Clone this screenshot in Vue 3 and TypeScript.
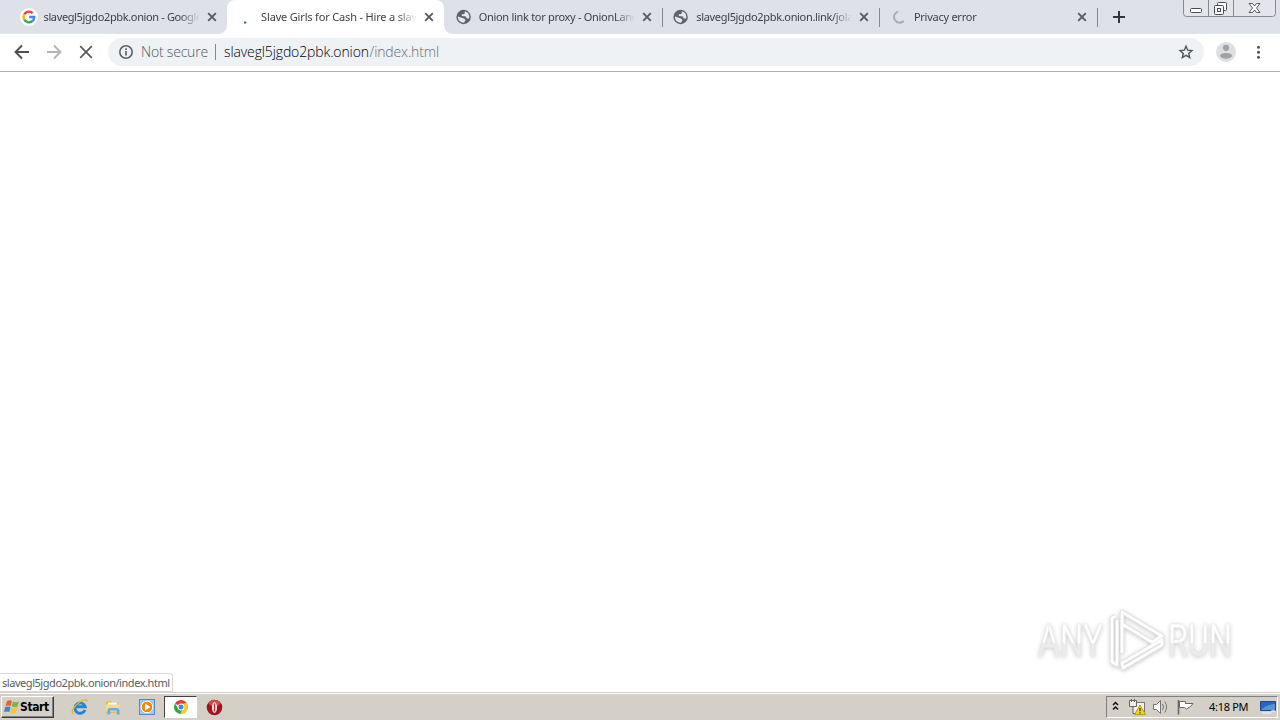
<script setup lang="ts">
type Icon = 'google' | 'dot' | 'globe' | 'spinner'
interface Tab {
  title: string
  icon: Icon
  active?: boolean
  sep?: boolean
  spacing: number
}
const tabs: Tab[] = [
  { title: 'slavegl5jgdo2pbk.onion - Google', icon: 'google', spacing: -0.37 },
  { title: 'Slave Girls for Cash - Hire a slav', icon: 'dot', active: true, spacing: -0.17 },
  { title: 'Onion link tor proxy - OnionLand', icon: 'globe', sep: true, spacing: -0.3 },
  { title: 'slavegl5jgdo2pbk.onion.link/jola', icon: 'globe', sep: true, spacing: -0.33 },
  { title: 'Privacy error', icon: 'spinner', sep: true, spacing: -0.25 },
]
</script>

<template>
  <div class="screen">
    <header class="strip">
      <div v-for="t in tabs" :key="t.title" class="tab" :class="{ active: t.active, sep: t.sep }">
        <svg class="fav" width="18" height="18" viewBox="0 0 18 18">
          <g v-if="t.icon === 'google'" fill="none" stroke-width="2.4">
            <circle cx="9" cy="9" r="9" fill="#fff" />
            <path d="M4.3 6.3A5.3 5.3 0 0 1 12.7 5.2" stroke="#ea4335" />
            <path d="M4.3 11.7A5.3 5.3 0 0 1 4.3 6.3" stroke="#fbbc05" />
            <path d="M12.5 13A5.3 5.3 0 0 1 4.3 11.7" stroke="#34a853" />
            <path d="M9.2 9H14.3A5.3 5.3 0 0 1 12.5 13" stroke="#4285f4" />
          </g>
          <rect v-else-if="t.icon === 'dot'" x="7" y="13.4" width="2.4" height="2" rx=".5" fill="#2f66ba" />
          <g v-else-if="t.icon === 'globe'">
            <circle cx="8.6" cy="9" r="7.2" fill="#5f6368" />
            <path d="M3 8.6 9 10.6 10.6 12 9 14.7C5.2 14.9 2.6 12 3 8.6M9.6 3.2c3 .5 4.8 2.9 4.8 5.8l-.7 1.8-2.2-.6-.5-1.6-4.2-.6V6.3h1.9L10 5z" fill="#e4e7ec" />
          </g>
          <path v-else d="M8 3.6A5.7 5.7 0 1 0 13.8 13" fill="none" stroke="#a6a9b0" stroke-width="1.8" />
        </svg>
        <span class="title" :style="{ letterSpacing: t.spacing + 'px' }">{{ t.title }}</span>
        <svg class="close" width="10" height="10" viewBox="0 0 10 10"><path d="M1.2 1.2 8.8 8.8M8.8 1.2 1.2 8.8" stroke="#585b61" stroke-width="1.9" /></svg>
      </div>
      <svg class="plus" width="12" height="12" viewBox="0 0 12 12"><path d="M6 0V12M0 6H12" stroke="#30343c" stroke-width="2" /></svg>
      <svg class="winbtns" width="94" height="18" viewBox="0 0 94 18">
        <path d="M.5 0V13.5Q.5 16.5 3.5 16.5H89.5Q92.5 16.5 92.5 13.5V0" fill="#e3e5eb" stroke="#858992" />
        <path d="M25.5 0V16M50.5 0V16" stroke="#858992" />
        <g fill="#fafafa" stroke="#484c55">
          <rect x="7.5" y="8.5" width="11" height="4" rx="1" />
          <rect x="34.5" y="2.5" width="9" height="8" rx="1" />
          <rect x="31.5" y="5.5" width="9" height="9" rx="1" />
          <rect x="34.5" y="8.5" width="3" height="3" />
          <path d="M66 3.5H69.5L71.5 6 73.5 3.5H77L73.5 8 77 12.5H73.5L71.5 10 69.5 12.5H66L69.5 8Z" stroke-width=".9" />
        </g>
      </svg>
    </header>

    <div class="toolbar">
      <svg class="nav" width="108" height="37" viewBox="0 0 108 37" fill="none" stroke-width="1.9">
        <path d="M29 18H16M22 11.5 15.5 18 22 24.5" stroke="#4c4f53" />
        <path d="M47 18H60M54 11.5 60.5 18 54 24.5" stroke="#b3b5b8" />
        <path d="M80.2 12.2 91.8 23.8M91.8 12.2 80.2 23.8" stroke="#55585c" stroke-width="1.7" />
      </svg>
      <div class="omnibox">
        <svg class="info" width="16" height="16" viewBox="0 0 16 16"><circle cx="8" cy="8" r="6.2" fill="none" stroke="#5f6368" stroke-width="1.6" /><path d="M8 7V11.5M8 4.3V5.9" stroke="#5f6368" stroke-width="1.7" /></svg>
        <span class="secure">Not secure</span>
        <i class="bar"></i>
        <span class="host">slavegl5jgdo2pbk.onion</span><span class="path">/index.html</span>
        <svg class="star" width="16" height="16" viewBox="0 0 16 16"><path d="M8 2.2 9.7 6.2 13.9 6.6 10.7 9.4 11.7 13.6 8 11.4 4.3 13.6 5.3 9.4 2.1 6.6 6.3 6.2Z" fill="none" stroke="#505357" stroke-width="1.4" /></svg>
      </div>
      <svg class="right" width="76" height="37" viewBox="0 0 76 37">
        <circle cx="22" cy="18" r="10" fill="#dedfe1" />
        <circle cx="22" cy="13.8" r="3.1" fill="#a0a1a4" /><ellipse cx="22" cy="21.8" rx="6" ry="2.9" fill="#a0a1a4" />
        <g fill="#505357"><circle cx="54.5" cy="13.3" r="1.5" /><circle cx="54.5" cy="18.3" r="1.5" /><circle cx="54.5" cy="23.3" r="1.5" /></g>
      </svg>
    </div>

    <main class="page">
      <div class="status">slavegl5jgdo2pbk.onion/index.html</div>
      <svg class="mark" width="204" height="72" viewBox="0 0 204 72">
        <defs>
          <linearGradient id="sheen" x1="0" y1="0" x2="0" y2="1">
            <stop offset=".54" stop-color="#fff" /><stop offset=".56" stop-color="#ececec" />
          </linearGradient>
        </defs>
        <g class="word">
          <text x="4" y="51" textLength="65" lengthAdjust="spacingAndGlyphs">ANY</text>
          <text x="134" y="51" textLength="64" lengthAdjust="spacingAndGlyphs">RUN</text>
        </g>
        <g fill="none" stroke-linejoin="round" transform="translate(75 3)">
          <path d="M13 45V4L53 28 43 34 13 16M7 8 3 10V54L8 57V12M13 55 53 32V37L14 60Z" stroke="#dfdfdf" stroke-width="4.4" />
          <path d="M13 45V4L53 28 43 34 13 16M7 8 3 10V54L8 57V12M13 55 53 32V37L14 60Z" stroke="#fff" stroke-width="2.8" />
        </g>
      </svg>
    </main>

    <footer class="taskbar">
      <div class="start">
        <svg width="16" height="16" viewBox="0 0 16 16"><path d="M3 2Q6 .5 8 2L6.8 7Q4.5 5.8 1.5 7Z" fill="#e7642b" /><path d="M9 2.5Q12 4 15 2.5L13.5 7.5Q11 9 7.7 7.5Z" fill="#78b747" /><path d="M1.2 8Q4.4 6.8 6.6 8L5.3 13Q3 11.8 0 13Z" fill="#3e83d2" /><path d="M7.5 8.6Q10.5 10 13.3 8.6L12 13.5Q9 15 6.2 13.4Z" fill="#f5c52c" /></svg>
        <span>Start</span>
      </div>
      <div class="apps">
        <div class="app">
          <svg width="18" height="18" viewBox="0 0 18 18"><path d="M14 12A5.2 5.2 0 1 1 14.2 8.8H5.2" fill="none" stroke="#1f86d8" stroke-width="2.9" /><path d="M2.2 15.8C-.5 14 3 8.5 7.5 5 11.5 1.8 16.5.2 16.3 4" fill="none" stroke="#e9b32b" stroke-width="1.4" /></svg>
        </div>
        <div class="app">
          <svg width="18" height="18" viewBox="0 0 18 18"><path d="M2 3H7L8.5 4.5H14.5V15H2Z" fill="#e2bd55" /><path d="M4 4.5H13V9H4Z" fill="#f7fbef" /><path d="M2 6.5H15.5V13.5H2Z" fill="#f5dc86" /><path d="M3.5 16.5V12Q3.5 10 6 10H13Q15.5 10 15.5 12V16.5H12.8V12.6H6.2V16.5Z" fill="#62b0dc" /></svg>
        </div>
        <div class="app">
          <svg width="18" height="18" viewBox="0 0 18 18"><rect x="1.5" y="1.5" width="15" height="15" fill="#9ecaec" stroke="#4c8dc3" /><circle cx="9" cy="9" r="5.8" fill="#f1870d" stroke="#fff" /><path d="M7 5.5 12.5 9 7 12.5Z" fill="#fff" /></svg>
        </div>
        <div class="app pressed">
          <svg width="16" height="16" viewBox="0 0 16 16"><path d="M8 8 2 4.4A7 7 0 0 1 14 4.5L8 5Z" fill="#e33e2f" /><path d="M14.1 4.5A7 7 0 0 1 7.5 15L10.7 9.5V4.6Z" fill="#f7cc25" /><path d="M2 4.4 5.3 9.5 9.5 10.5 7.5 15A7 7 0 0 1 2 4.4" fill="#37a34b" /><circle cx="8" cy="8" r="3.1" fill="#4887e8" stroke="#fff" /></svg>
        </div>
        <div class="app">
          <svg width="18" height="18" viewBox="0 0 18 18"><circle cx="9.5" cy="9.5" r="7.8" fill="#a3141c" /><path d="M3.5 5.5A7 7 0 0 1 15.5 5.5L12.5 8H6.5Z" fill="#d34a4b" /><ellipse cx="9.5" cy="9.5" rx="2.5" ry="5.4" fill="#f6eeee" /><path d="M9.5 5.5V13.5" stroke="#b03038" stroke-width="1.4" /></svg>
        </div>
      </div>
      <div class="tray">
        <svg width="92" height="20" viewBox="0 0 92 20">
          <path d="M6 8 8.5 5.5 11 8M6 12.5 8.5 10 11 12.5" fill="none" stroke="#111" stroke-width="1.5" />
          <rect x="26.5" y="5.5" width="11" height="9" fill="#f3f3ef" stroke="#747474" /><path d="M22.5 3.5H29.5V9.5H22.5ZM26 9V16.5H30M24.5 2V5M27.5 2V5" fill="#eee" stroke="#656565" /><path d="M33 8 38.3 17.5H27.7Z" fill="#f7d91c" stroke="#b69c12" /><path d="M33 11V14.2M33 15.2V16.5" stroke="#222" stroke-width="1.2" />
          <path d="M46.5 7.5H49.5L53.5 3.5V16.5L49.5 12.5H46.5Z" fill="#fff" stroke="#747474" /><path d="M55.5 7Q57.5 10 55.5 13M57.7 4.5Q61.5 10 57.7 15.5" fill="none" stroke="#777" />
          <path d="M71.5 3V17.5" stroke="#666" stroke-width="1.6" /><path d="M72.5 4.5H78.5V6.5H86L83.5 9.5 79.5 12 77.5 10.5H72.5Z" fill="#fff" stroke="#666" />
        </svg>
        <span class="time">4:18 PM</span>
        <svg class="desk" width="17" height="16" viewBox="0 0 17 16"><path d="M.5 2.5H15.5V11.5H.5Z" fill="#2867bf" stroke="#1e4688" /><path d="M1 11Q5 6 15 5V11Z" fill="#5794d7" /><path d="M2 14H10L12 12H15" fill="none" stroke="#dce9f5" stroke-width="1.5" /></svg>
      </div>
    </footer>
  </div>
</template>

<style>
html, body { margin: 0; overflow: hidden; background: #fff; }
</style>

<style scoped>
.screen { width: 1280px; height: 720px; display: flex; flex-direction: column; background: #fff; font: 11px/14px "Noto Sans", Tahoma, sans-serif; white-space: nowrap; overflow: hidden; }
.strip { height: 34px; background: #dee1e8; display: flex; align-items: flex-start; padding-left: 9px; position: relative; box-sizing: border-box; flex: none; }
.tab { width: 217.6px; height: 34px; box-sizing: border-box; display: flex; align-items: center; padding-left: 10.5px; position: relative; color: #3b3f47; flex: none; }
.tab.active { background: #fff; border-radius: 8px 8px 0 0; }
.tab.active::before, .tab.active::after { content: ""; position: absolute; bottom: 0; width: 8px; height: 8px; }
.tab.active::before { left: -8px; background: radial-gradient(circle at 0 0, transparent 7.5px, #fff 8px); }
.tab.active::after { right: -8px; background: radial-gradient(circle at 100% 0, transparent 7.5px, #fff 8px); }
.tab.sep::after { content: ""; position: absolute; right: -.8px; top: 8px; width: 1px; height: 19px; background: #858a94; }
.fav { flex: none; }
.title { width: 155px; margin-left: 6px; -webkit-mask-image: linear-gradient(90deg, #000 136px, transparent 156px); mask-image: linear-gradient(90deg, #000 136px, transparent 156px); }
.close { margin-left: 8px; flex: none; }
.plus { margin: 11px 0 0 16px; }
.winbtns { position: absolute; right: 3px; top: 0; }
.toolbar { height: 38px; display: flex; align-items: flex-start; border-bottom: 1px solid #aeb0b2; box-sizing: border-box; flex: none; }
.nav, .right { flex: none; }
.omnibox { margin-top: 4px; width: 1096px; height: 28px; background: #eff2f5; border-radius: 14px; display: flex; align-items: center; box-sizing: border-box; padding: 0 10px; font-family: "Open Sans", sans-serif; font-size: 14px; line-height: 20px; font-weight: 300; }
.secure { margin-left: 7px; width: 67px; color: #53575c; letter-spacing: -.2px; }
.bar { width: 1px; height: 16px; background: #85898e; margin: 0 8px 0 7px; }
.host { color: #000; letter-spacing: -.12px; width: 145.5px; }
.path { color: #686c70; letter-spacing: -.13px; }
.star { margin-left: auto; }
.page { flex: 1; position: relative; }
.status { position: absolute; left: 0; bottom: 0; width: 173px; height: 19px; box-sizing: border-box; border: 1px solid #d9d9d9; border-left: 0; border-radius: 0 3px 0 0; padding: 2px 0 0 2px; color: #5a5d61; letter-spacing: -.45px; }
.mark { position: absolute; left: 1034px; top: 533px; filter: drop-shadow(0 1px 2px #c8c8c8); }
.word { font: 45px Roboto, sans-serif; fill: url(#sheen); stroke: #e9e9e9; stroke-width: .6px; }
.taskbar { height: 28px; box-sizing: border-box; border-top: 1px solid #d2cfc8; box-shadow: inset 0 1px #fff; background: #d4d0c8; display: flex; padding-top: 3px; flex: none; }
.start { width: 53px; height: 22px; margin-left: 1px; box-sizing: border-box; border: 1px solid; border-color: #fff #3c3c3c #3c3c3c #fff; box-shadow: inset -1px -1px #808080; display: flex; align-items: center; padding-left: 2px; font: bold 12px/16px "DejaVu Sans Condensed", sans-serif; color: #000; }
.start span { margin-left: 0; letter-spacing: -.4px; }
.apps { display: flex; margin-left: 9px; }
.app { width: 33.6px; height: 22px; display: flex; align-items: center; justify-content: center; box-sizing: border-box; }
.pressed { background: #fff; border: 1px solid; border-color: #404040 #fff #fff #404040; }
.tray { width: 172px; height: 22px; margin-left: auto; margin-right: 2px; border: 1px solid; border-color: #808080 #fff #fff #808080; box-sizing: border-box; display: flex; align-items: center; color: #000; }
.time { margin-left: 10px; width: 41px; letter-spacing: -.3px; }
.desk { margin-left: 10px; }
</style>
